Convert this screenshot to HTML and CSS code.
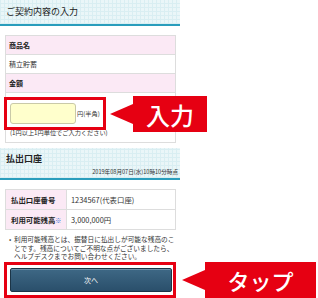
FILE: index.html
```html
<!DOCTYPE html>
<html>
<head>
	<meta charset="utf-8">
	<title>ご契約内容の入力</title>
	<link rel="stylesheet" href="styles.css">
</head>
<body>
<main class="phone">
	<div class="sec-head">
		<h2>ご契約内容の入力</h2>
	</div>

	<div class="box">
		<div class="row label">商品名</div>
		<div class="row">積立貯蓄</div>
		<div class="row label">金額</div>
		<div class="amount">
			<div class="amount-line">
				<input class="amount-input" type="text">
				<span class="unit">円(半角)</span>
			</div>
			<p class="hint">(1円以上1円単位でご入力ください)</p>
		</div>
	</div>

	<div class="sec-head tall">
		<h2>払出口座</h2>
		<p class="stamp">2019年08月07日(水)10時10分時点</p>
	</div>

	<div class="box grid">
		<div class="cell label">払出口座番号</div>
		<div class="cell">1234567(代表口座)</div>
		<div class="cell label">利用可能残高<span class="mark">※</span></div>
		<div class="cell">3,000,000円</div>
	</div>

	<ul class="notes">
		<li>利用可能残高とは、振替日に払出しが可能な残高のことです。残高についてご不明な点がございましたら、ヘルプデスクまでお問い合わせください。</li>
	</ul>

	<div class="next">
		<button class="next-btn">次へ</button>
	</div>
</main>

<div class="frame frame-input"></div>
<div class="callout callout-input">入力</div>

<div class="frame frame-next"></div>
<div class="callout callout-next">タップ</div>
</body>
</html>
```

FILE: styles.css
```css
body {
	margin: 0;
	background-color: #fff;
	color: #333;
	font-family: "Noto Sans CJK JP", "Noto Sans", sans-serif;
}

.phone {
	width: 180px;
}

.sec-head {
	height: 24px;
	border-bottom: 2px solid #2a9dbc;
	background-color: #eaf6f8;
	background-image:
		repeating-linear-gradient(0deg, #d9eef2 0 1px, transparent 1px 4px),
		repeating-linear-gradient(90deg, #d9eef2 0 1px, transparent 1px 4px);
	padding-left: 6px;
	display: flex;
	flex-direction: column;
	justify-content: center;
}

.sec-head h2 {
	margin: 0;
	font-size: 9px;
	font-weight: 400;
	line-height: 12px;
	color: #222;
}

.sec-head.tall {
	height: 30px;
	margin-top: 5px;
	justify-content: flex-start;
}

.sec-head.tall h2 {
	font-weight: 700;
	margin-top: 5px;
}

.stamp {
	margin: 3px 2px 0 0;
	font-size: 5.6px;
	line-height: 8px;
	text-align: right;
	color: #333;
}

.box {
	margin: 9px 4px 0 5px;
	border: 1px solid #ddd;
	font-size: 7px;
}

.row {
	height: 18px;
	line-height: 18px;
	padding-left: 3px;
	border-bottom: 1px solid #ddd;
}

.label {
	background-color: #fbe9f5;
	font-weight: 700;
	color: #222;
}

.amount {
	height: 49px;
	padding: 10px 0 0 4px;
	box-sizing: border-box;
}

.amount-line {
	display: flex;
	align-items: center;
	gap: 1px;
}

.amount-input {
	width: 66px;
	height: 21px;
	box-sizing: border-box;
	margin: 0;
	border: 1px solid #c9c9a8;
	border-radius: 3px;
	background-color: #ffffcc;
}

.unit {
	font-size: 6.2px;
}

.hint {
	margin: 5px 0 0;
	font-size: 6.2px;
	line-height: 8px;
}

.grid {
	display: grid;
	grid-template-columns: 61px 1fr;
}

.cell {
	height: 19px;
	line-height: 19px;
	padding-left: 4px;
	font-size: 7.4px;
	border-bottom: 1px solid #ddd;
}

.cell:nth-last-child(-n+2) {
	border-bottom: 0;
}

.cell.label {
	border-right: 1px solid #ddd;
	padding-left: 5px;
}

.mark {
	color: #2a6bd1;
	font-weight: 400;
	font-size: 6px;
}

.notes {
	width: 162px;
	margin: 5px 0 0 14px;
	padding: 0;
	font-size: 6.7px;
	line-height: 8.6px;
	color: #333;
	list-style: none;
}

.notes li {
	position: relative;
}

.notes li::before {
	content: "•";
	position: absolute;
	left: -5px;
}

.next {
	padding: 7px 8px 0 10px;
}

.next-btn {
	display: block;
	width: 100%;
	height: 24px;
	border: 1px solid #1c3547;
	border-radius: 2px;
	background: linear-gradient(#3e6885, #2a4f6b);
	color: #fff;
	font-family: inherit;
	font-size: 7px;
	box-shadow: inset 0 1px 0 #6d90a8;
}

.frame {
	position: absolute;
	border: 3px solid #e60012;
	box-sizing: border-box;
}

.frame-input {
	left: 4px;
	top: 97px;
	width: 102px;
	height: 33px;
}

.frame-next {
	left: 4px;
	top: 262px;
	width: 172px;
	height: 36px;
}

.callout {
	position: absolute;
	background-color: #e60012;
	color: #fff;
	display: flex;
	align-items: center;
	justify-content: center;
	font-weight: 500;
}

.callout::before {
	content: "";
	position: absolute;
	right: 100%;
	top: 50%;
	border-right: 23px solid #e60012;
	border-top: 10px solid transparent;
	border-bottom: 10px solid transparent;
	transform: translateY(-50%);
}

.callout-input {
	left: 133px;
	top: 96px;
	width: 74px;
	height: 36px;
	font-size: 24px;
}

.callout-next {
	left: 205px;
	top: 262px;
	width: 111px;
	height: 36px;
	font-size: 22px;
}
```
